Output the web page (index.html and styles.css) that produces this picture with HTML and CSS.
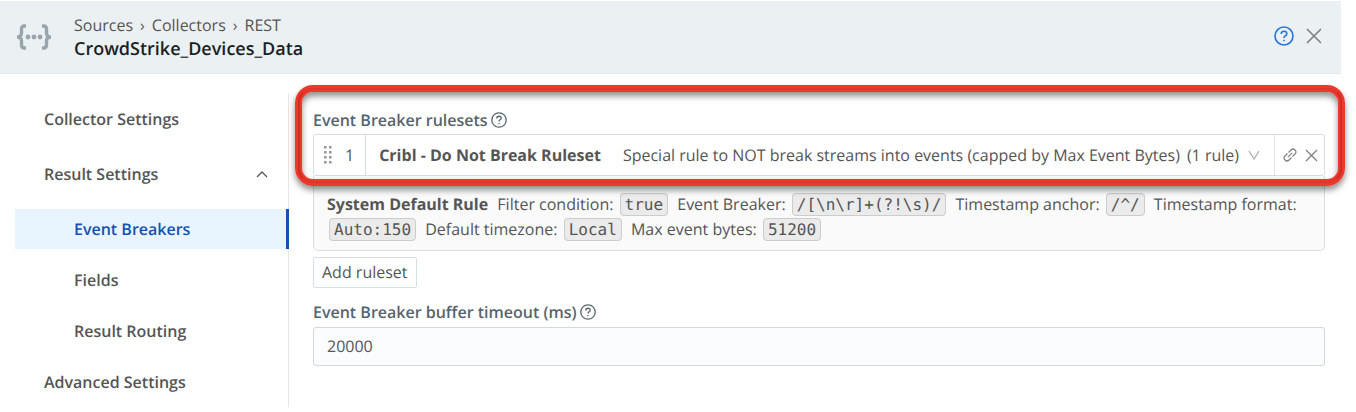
FILE: index.html
```
<!DOCTYPE html>
<html lang="en">
<head>
<meta charset="utf-8">
<meta name="viewport" content="width=device-width, initial-scale=1">
<title>CrowdStrike_Devices_Data</title>
<link rel="stylesheet" href="styles.css">
</head>
<body>
<div class="drawer">
  <header class="header">
    <svg class="logo" width="36" height="26" viewBox="0 0 36 26" fill="none" stroke="#98a5af" stroke-width="3.400" aria-hidden="true">
      <path d="M10 2H8.500Q5.500 2 5.500 5V9Q5.500 13 1 13Q5.500 13 5.500 17V21Q5.500 24 8.500 24H10"/>
      <path d="M26 2H27.500Q30.500 2 30.500 5V9Q30.500 13 35 13Q30.500 13 30.500 17V21Q30.500 24 27.500 24H26"/>
      <g fill="#98a5af" stroke="none"><circle cx="12" cy="13" r="2.400"/><circle cx="18" cy="13" r="2.400"/><circle cx="24" cy="13" r="2.400"/></g>
    </svg>
    <div class="heading">
      <nav class="crumbs" aria-label="Breadcrumb">
        <a href="#">Sources</a><span class="sep">›</span><a href="#">Collectors</a><span class="sep">›</span><a href="#">REST</a>
      </nav>
      <h1 class="title">CrowdStrike_Devices_Data</h1>
    </div>
    <div class="header-actions">
      <button class="icon-button help-blue" type="button" aria-label="Help">
        <svg width="20" height="20" viewBox="0 0 20 20" fill="none" stroke="currentColor" stroke-width="1.600"><circle cx="10" cy="10" r="9"/><path d="M7.200 8Q7.200 5.300 10 5.300T12.800 7.800Q12.800 9.200 11.200 9.900Q10 10.500 10 12"/><path d="M10 13.700V15.300"/></svg>
      </button>
      <button class="icon-button" type="button" aria-label="Close">
        <svg width="16" height="16" viewBox="0 0 16 16" fill="none" stroke="currentColor" stroke-width="1.600"><path d="M1 1L15 15M15 1L1 15"/></svg>
      </button>
    </div>
  </header>
  <div class="body">
    <nav class="sidebar" aria-label="Settings">
      <a class="item" href="#">Collector Settings</a>
      <a class="item group" href="#">Result Settings
        <svg width="12" height="8" viewBox="0 0 12 8" fill="none" stroke="currentColor" stroke-width="1.300" aria-hidden="true"><path d="M1 7L6 2L11 7"/></svg>
      </a>
      <a class="item sub active" href="#" aria-current="page">Event Breakers</a>
      <a class="item sub" href="#">Fields</a>
      <a class="item sub" href="#">Result Routing</a>
      <a class="item" href="#">Advanced Settings</a>
    </nav>
    <main class="content">
      <section class="rulesets">
        <div class="highlight" aria-hidden="true"></div>
        <h2 class="label" id="rulesets-label">Event Breaker rulesets
          <svg width="16" height="16" viewBox="0 0 20 20" fill="none" stroke="currentColor" stroke-width="1.600" aria-hidden="true"><circle cx="10" cy="10" r="9"/><path d="M7.200 8Q7.200 5.300 10 5.300T12.800 7.800Q12.800 9.200 11.200 9.900Q10 10.500 10 12"/><path d="M10 13.700V15.300"/></svg>
        </h2>
        <div class="ruleset-row">
          <div class="order">
            <svg width="8" height="18" viewBox="0 0 8 18" fill="#999" aria-hidden="true"><path d="M0 0h2.600v2.600h-2.600zM5 0h2.600v2.600h-2.600zM0 5h2.600v2.600h-2.600zM5 5h2.600v2.600h-2.600zM0 10h2.600v2.600h-2.600zM5 10h2.600v2.600h-2.600zM0 15h2.600v2.600h-2.600zM5 15h2.600v2.600h-2.600z"/></svg>
            <span>1</span>
          </div>
          <button class="select" type="button" aria-haspopup="listbox" aria-labelledby="rulesets-label">
            <strong class="select-name">Cribl - Do Not Break Ruleset</strong>
            <span class="select-text">Special rule to NOT break streams into events (capped by Max Event Bytes)</span>
            <span class="select-count">(1 rule)</span>
            <svg width="12" height="10" viewBox="0 0 12 10" fill="none" stroke="#aaa" stroke-width="1.200" aria-hidden="true"><path d="M1 1L6 9L11 1"/></svg>
          </button>
          <div class="row-actions">
            <button class="icon-button" type="button" aria-label="Open ruleset">
              <svg width="14" height="14" viewBox="0 0 14 14" fill="none" stroke="currentColor" stroke-width="1.200"><path d="M5.500 4.500L8 2Q10 0 12 2T12 6L9.500 8.500M4.500 5.500L2 8Q0 10 2 12T6 12L8.500 9.500M4.800 9.200L9.200 4.800"/></svg>
            </button>
            <button class="icon-button" type="button" aria-label="Remove ruleset">
              <svg width="13" height="13" viewBox="0 0 13 13" fill="none" stroke="currentColor" stroke-width="1.300"><path d="M1 1L12 12M12 1L1 12"/></svg>
            </button>
          </div>
        </div>
        <div class="rule-panel">
          <strong class="rule-name">System Default Rule</strong>
          Filter condition: <code>true</code>
          <span class="term">Event Breaker:</span> <code>/[\n\r]+(?!\s)/</code>
          <span class="term">Timestamp anchor:</span> <code>/^/</code>
          <span class="term">Timestamp format:</span> <code>Auto:150</code>
          <span class="term">Default timezone:</span> <code>Local</code>
          <span class="term">Max event bytes:</span> <code>51200</code>
        </div>
      </section>
      <button class="add" type="button">Add ruleset</button>
      <label class="label" for="timeout">Event Breaker buffer timeout (ms)
        <svg width="16" height="16" viewBox="0 0 20 20" fill="none" stroke="currentColor" stroke-width="1.600" aria-hidden="true"><circle cx="10" cy="10" r="9"/><path d="M7.200 8Q7.200 5.300 10 5.300T12.800 7.800Q12.800 9.200 11.200 9.900Q10 10.500 10 12"/><path d="M10 13.700V15.300"/></svg>
      </label>
      <input class="input" id="timeout" type="text" value="20000">
    </main>
  </div>
</div>
</body>
</html>
```
FILE: styles.css
```
* { box-sizing: border-box; }
body {
  margin: 0;
  background: #fff;
  color: #555;
  font: 16px/24px "Open Sans", "Noto Sans", sans-serif;
  text-rendering: geometricPrecision;
}
a { color: inherit; text-decoration: none; }
button, input { font: inherit; color: inherit; text-rendering: inherit; }
svg { display: block; flex: none; }

.drawer { margin: 1px 15px 0 0; }
.header {
  display: flex;
  align-items: center;
  padding: 12px 19px 12px 16px;
  background: #ebf0f3;
  border-bottom: 1px solid #e4e7e9;
}
.heading { flex: 1; margin-left: 22px; }
.crumbs { display: flex; }
.sep { margin: 0 7px; }
.title { margin: 0; color: #1c1f22; font-size: 18px; font-weight: 600; line-height: 24px; }
.header-actions { display: flex; align-items: center; gap: 12px; margin-bottom: 3px; }
.icon-button { padding: 0; border: 0; background: none; color: #808080; }
.help-blue { color: #2575e0; }

.body { display: flex; padding: 19px 0 6px; }
.sidebar {
  flex: none;
  width: 289px;
  padding: 6px 0 5px 15px;
  border-right: 1px solid #e6e6e6;
  font-weight: 600;
}
.item { display: block; padding: 8px 20px 8px 29px; margin-bottom: 11px; line-height: 24px; }
.item:first-child { margin-bottom: 15px; }
.item:last-child { margin-bottom: 0; }
.group { display: flex; align-items: center; justify-content: space-between; margin-bottom: 15px; }
.sub { padding-left: 59px; }
.active { margin-right: -1px; background: #e8f5fe; border-right: 3px solid #1450b4; color: #1450b4; }

.content { flex: 1; min-width: 0; padding: 15px 16px 0 24px; }
.rulesets { position: relative; }
.highlight {
  position: absolute;
  z-index: 1;
  top: -23px;
  left: -18px;
  right: -20px;
  height: 101px;
  border: 7px solid #ec392d;
  border-radius: 18px;
  box-shadow: 0 4px 6px rgba(0, 0, 0, .45), inset 0 4px 6px rgba(0, 0, 0, .45);
  pointer-events: none;
}
.highlight::after {
  content: "";
  position: absolute;
  inset: -4px;
  border: 2px solid #d02c21;
  border-top-color: #e0352a;
  border-bottom-color: #e0352a;
  border-radius: 14px;
}
.label {
  display: flex;
  align-items: center;
  gap: 3px;
  margin: 0;
  color: #57646d;
  font-size: 16px;
  font-weight: 600;
  line-height: 24px;
}
.ruleset-row {
  display: flex;
  height: 42px;
  margin-top: 2px;
  border: 1px solid #d5dde2;
  border-radius: 3px;
}
.order { display: flex; align-items: center; gap: 13px; padding: 0 11px 0 10px; border-right: 1px solid #d5dde2; }
.select {
  display: flex;
  flex: 1;
  align-items: center;
  min-width: 0;
  padding: 0 14px 0 13px;
  border: 0;
  background: none;
  text-align: left;
  white-space: nowrap;
}
.select-name { margin-right: 22px; font-weight: 700; }
.select-text { flex: 1; }
.select-count { margin-right: 9px; }
.row-actions { display: flex; align-items: center; gap: 8px; padding: 0 6px 0 8px; border-left: 1px solid #e2e2e2; }
.rule-panel {
  padding: 16px 13px 8px;
  border: 1px solid #ddd;
  border-top: 0;
  border-radius: 0 0 5px 5px;
  background: #fafafa;
  line-height: 25px;
}
.rule-name { margin-right: 5px; }
.term { margin-left: 2px; }
.rule-panel code {
  margin: 0 3px 0 2px;
  padding: 1px 4px;
  border: 1px solid #ccc;
  border-radius: 4px;
  background: #ebebeb;
  font: 16px/20px "DejaVu Sans Mono", "Liberation Mono", monospace;
}
.add {
  display: block;
  margin: 6px 0 12px;
  padding: 2px 8px 3px;
  border: 1px solid #d5dfe4;
  border-radius: 2px;
  background: #fff;
}
.input {
  display: block;
  width: 100%;
  margin-top: 3px;
  padding: 6px 13px 7px;
  border: 1px solid #d2d8dc;
  border-radius: 3px;
  background: #fafcfe;
}
```
